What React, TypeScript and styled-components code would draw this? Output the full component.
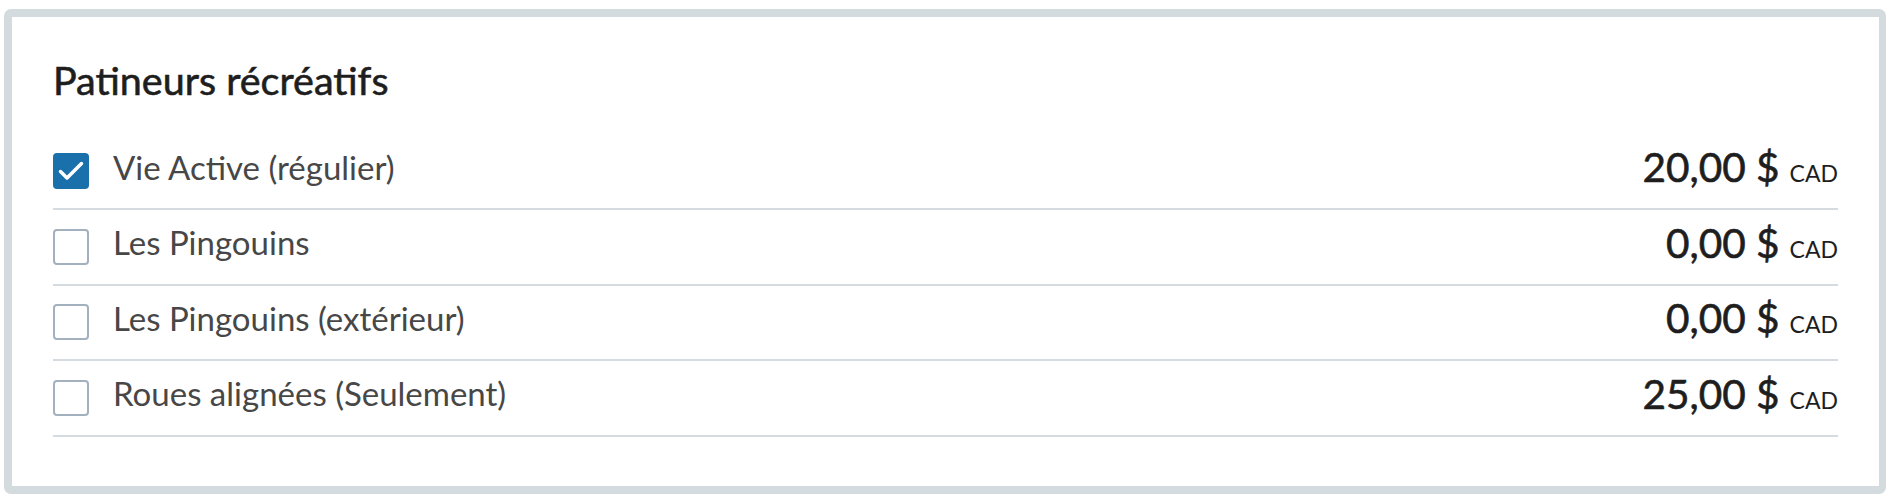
import React from "react";
import styled, { createGlobalStyle } from "styled-components";

const GlobalStyle = createGlobalStyle`
  html, body { margin: 0; padding: 0; background: #ffffff; }
  body { font-family: "Lato", "Noto Sans", sans-serif; }
`;

const Page = styled.div`
  padding: 9px 0 0 4px;
`;

const Card = styled.section`
  box-sizing: border-box;
  height: 485px;
  border: 8px solid #d4dbde;
  border-right-width: 7px;
  border-radius: 7px;
  background: #ffffff;
  padding: 38.5px 41px 0 41px;
`;

const Title = styled.h2`
  margin: 0 0 31px 0;
  font-size: 39.5px;
  line-height: 48px;
  font-weight: 400;
  -webkit-text-stroke: 0.6px #1e1e1e;
  color: #1e1e1e;
`;

const List = styled.div`
  display: flex;
  flex-direction: column;
`;

const Row = styled.label`
  box-sizing: border-box;
  display: flex;
  align-items: center;
  height: 75.5px;
  border-bottom: 2px solid #d6dbdf;
  cursor: pointer;
`;

const Box = styled.span<{ $checked: boolean }>`
  box-sizing: border-box;
  flex: 0 0 36px;
  width: 36px;
  height: 36px;
  border-radius: 4px;
  display: flex;
  align-items: center;
  justify-content: center;
  background: ${(p) => (p.$checked ? "#1a70aa" : "#ffffff")};
  border: ${(p) => (p.$checked ? "none" : "2px solid #a3b0bd")};
`;

const Label = styled.span`
  margin-left: 24px;
  padding-bottom: 7px;
  flex: 1;
  font-size: 33px;
  line-height: 1.2;
  color: #474747;
`;

const Price = styled.span`
  display: flex;
  align-items: baseline;
  gap: 10px;
  padding-bottom: 7px;
  color: #1e1e1e;
  line-height: 1.2;
`;

const Amount = styled.span`
  font-size: 40.5px;
  -webkit-text-stroke: 0.6px #1e1e1e;
`;

const Currency = styled.span`
  font-size: 23px;
`;

const items = [
  { label: "Vie Active (régulier)", amount: "20,00 $", checked: true },
  { label: "Les Pingouins", amount: "0,00 $", checked: false },
  { label: "Les Pingouins (extérieur)", amount: "0,00 $", checked: false },
  { label: "Roues alignées (Seulement)", amount: "25,00 $", checked: false },
];

function Check() {
  return (
    <svg width="36" height="36" viewBox="0 0 36 36" fill="none">
      <path d="M7.5 18.5L14 25L28.5 10.5" stroke="#ffffff" strokeWidth="3.5" strokeLinecap="round" strokeLinejoin="round" />
    </svg>
  );
}

export default function App() {
  return (
    <>
      <GlobalStyle />
      <Page>
        <Card>
          <Title>Patineurs récréatifs</Title>
          <List>
            {items.map((it) => (
              <Row key={it.label}>
                <Box $checked={it.checked}>{it.checked && <Check />}</Box>
                <Label>{it.label}</Label>
                <Price>
                  <Amount>{it.amount}</Amount>
                  <Currency>CAD</Currency>
                </Price>
              </Row>
            ))}
          </List>
        </Card>
      </Page>
    </>
  );
}
